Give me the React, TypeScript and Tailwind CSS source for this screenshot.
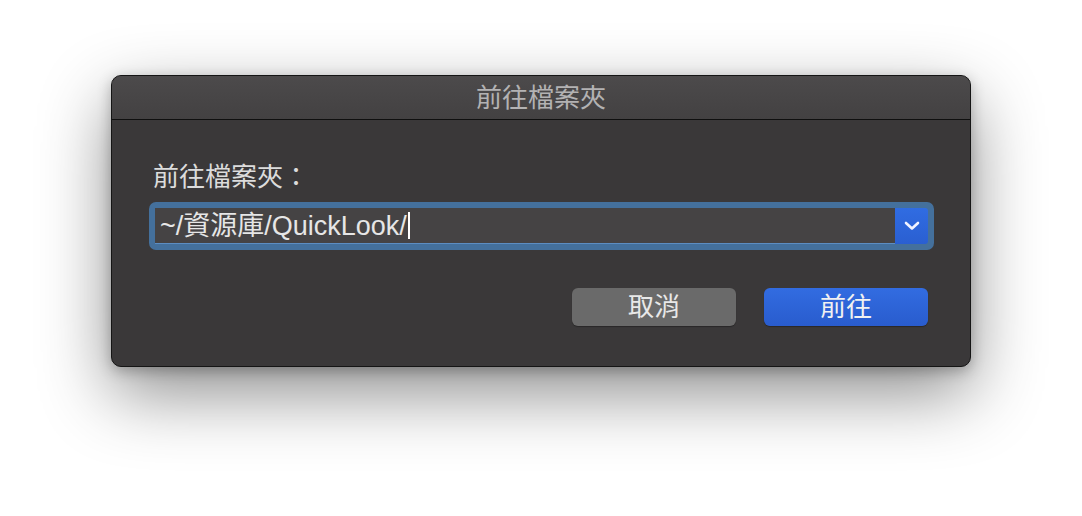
export default function App() {
  const font = { fontFamily: '"Liberation Sans", "Noto Sans CJK TC", sans-serif' };

  return (
    <div className="w-[1082px] h-[516px] bg-white overflow-hidden" style={font}>
      <div className="ml-[111px] pt-[75px]">
        <div className="w-[860px] rounded-[10px] border border-[#151515] bg-[#3a3839] shadow-[0_26px_70px_rgba(0,0,0,0.45),0_4px_14px_rgba(0,0,0,0.25)] overflow-hidden">
          {/* title bar */}
          <div className="h-[44px] flex items-center justify-center bg-gradient-to-b from-[#4c4a4b] to-[#434142] border-b border-[#0f0f0f]">
            <span className="text-[26px] leading-[30px] text-[#b3b2b3]">前往檔案夾</span>
          </div>

          <div className="pt-[42px] pb-[40px] pl-[37px] pr-[36px]">
            <div className="pl-[4px] text-[26px] leading-[30px] text-[#dcdcdc]">前往檔案夾：</div>

            <div className="mt-[10px] h-[48px] rounded-[7px] bg-[#44709c] p-[6px] flex">
              <div className="flex-1 flex items-center bg-[#454344] border-b border-[#5c8dc2] pl-[5px]">
                <span className="text-[27px] leading-[30px] text-[#e6e6e6]">~/資源庫/QuickLook/</span>
                <span className="ml-[1px] w-[2px] h-[27px] bg-white" />
              </div>
              <div className="w-[33px] flex items-center justify-center rounded-r-[3px] bg-gradient-to-b from-[#306ce2] to-[#2a5fd1]">
                <svg width="16" height="10" viewBox="0 0 16 10" fill="none">
                  <path d="M2 2l6 5.5L14 2" stroke="#f2f4ff" strokeWidth="2.6" strokeLinecap="round" strokeLinejoin="round" />
                </svg>
              </div>
            </div>

            <div className="mt-[38px] mr-[6px] flex justify-end gap-[28px]">
              <button className="w-[164px] h-[38px] rounded-[6px] bg-[#6a6a6a] text-[26px] leading-[30px] text-[#e8e8e8] shadow-[0_1px_1px_rgba(0,0,0,0.3)]">
                取消
              </button>
              <button className="w-[164px] h-[38px] rounded-[6px] bg-gradient-to-b from-[#326ce1] to-[#295cce] text-[26px] leading-[30px] text-[#f1f1f1] shadow-[0_1px_1px_rgba(0,0,0,0.3)]">
                前往
              </button>
            </div>
          </div>
        </div>
      </div>
    </div>
  );
}
